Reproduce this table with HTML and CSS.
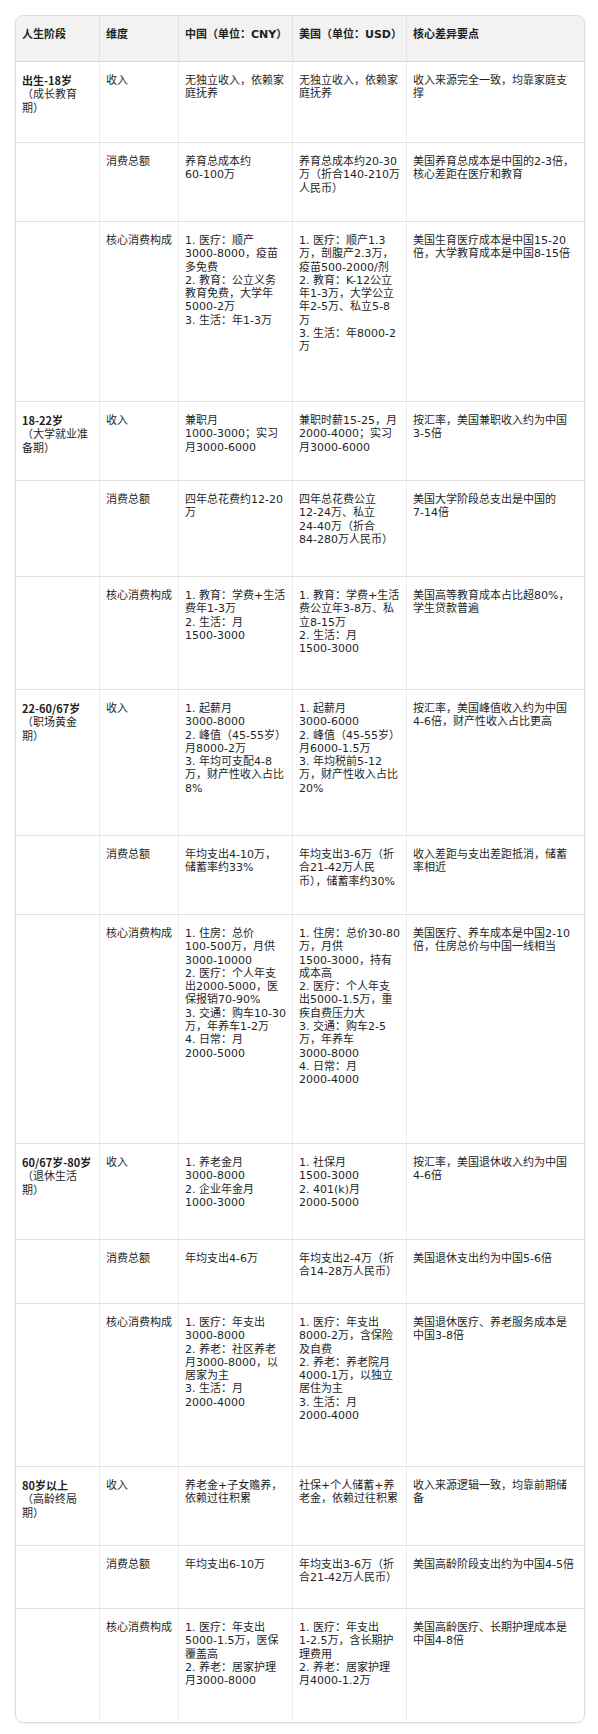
FILE: index.html
```html
<!DOCTYPE html>
<html lang="zh">
<head>
<meta charset="utf-8">
<link rel="stylesheet" href="styles.css">
</head>
<body>
<div class="wrap">
<table class="cmp">
<thead>
<tr class="rh"><th class="k1">人生阶段</th><th class="k2">维度</th><th class="k3">中国（单位：CNY）</th><th class="k4">美国（单位：USD）</th><th class="k5">核心差异要点</th></tr>
</thead>
<tbody>
<tr class="r81"><td><b>出生-18岁</b><br>（成长教育期）</td><td>收入</td><td>无独立收入，依赖家庭抚养</td><td>无独立收入，依赖家庭抚养</td><td>收入来源完全一致，均靠家庭支撑</td></tr>
<tr class="r79"><td></td><td>消费总额</td><td>养育总成本约<span class="n">60-100</span>万</td><td>养育总成本约<span class="n">20-30</span>万（折合<span class="n">140-210</span>万人民币）</td><td>美国养育总成本是中国的<span class="n">2-3</span>倍，核心差距在医疗和教育</td></tr>
<tr class="r180"><td></td><td>核心消费构成</td><td>1. 医疗：顺产<span class="n">3000-8000</span>，疫苗多免费<br>2. 教育：公立义务教育免费，大学年<span class="n">5000-2</span>万<br>3. 生活：年<span class="n">1-3</span>万</td><td>1. 医疗：顺产1.3万，剖腹产2.3万，疫苗<span class="n">500-2000/</span>剂<br>2. 教育：<span class="n">K-12</span>公立年<span class="n">1-3</span>万，大学公立年<span class="n">2-5</span>万、私立<span class="n">5-8</span>万<br>3. 生活：年<span class="n">8000-2</span>万</td><td>美国生育医疗成本是中国<span class="n">15-20</span>倍，大学教育成本是中国<span class="n">8-15</span>倍</td></tr>

<tr class="r79"><td><b>18-22岁</b><br>（大学就业准备期）</td><td>收入</td><td>兼职月<span class="n">1000-3000</span>；实习月<span class="n">3000-6000</span></td><td>兼职时薪<span class="n">15-25</span>，月<span class="n">2000-4000</span>；实习月<span class="n">3000-6000</span></td><td>按汇率，美国兼职收入约为中国<span class="n">3-5</span>倍</td></tr>
<tr class="r96"><td></td><td>消费总额</td><td>四年总花费约<span class="n">12-20</span>万</td><td>四年总花费公立<span class="n">12-24</span>万、私立<span class="n">24-40</span>万（折合<span class="n">84-280</span>万人民币）</td><td>美国大学阶段总支出是中国的<span class="n">7-14</span>倍</td></tr>
<tr class="r113"><td></td><td>核心消费构成</td><td>1. 教育：学费+生活费年<span class="n">1-3</span>万<br>2. 生活：月<span class="n">1500-3000</span></td><td>1. 教育：学费+生活费公立年<span class="n">3-8</span>万、私立<span class="n">8-15</span>万<br>2. 生活：月<span class="n">1500-3000</span></td><td>美国高等教育成本占比超80%，学生贷款普遍</td></tr>

<tr class="r146"><td><b>22-60/67岁</b><br>（职场黄金期）</td><td>收入</td><td>1. 起薪月<span class="n">3000-8000</span><br>2. 峰值（<span class="n">45-55</span>岁）月<span class="n">8000-2</span>万<br>3. 年均可支配<span class="n">4-8</span>万，财产性收入占比8%</td><td>1. 起薪月<span class="n">3000-6000</span><br>2. 峰值（<span class="n">45-55</span>岁）月<span class="n">6000-1.5</span>万<br>3. 年均税前<span class="n">5-12</span>万，财产性收入占比20%</td><td>按汇率，美国峰值收入约为中国<span class="n">4-6</span>倍，财产性收入占比更高</td></tr>
<tr class="r79"><td></td><td>消费总额</td><td>年均支出<span class="n">4-10</span>万，储蓄率约33%</td><td>年均支出<span class="n">3-6</span>万（折合<span class="n">21-42</span>万人民币），储蓄率约30%</td><td>收入差距与支出差距抵消，储蓄率相近</td></tr>
<tr class="r229"><td></td><td>核心消费构成</td><td>1. 住房：总价<span class="n">100-500</span>万，月供<span class="n">3000-10000</span><br>2. 医疗：个人年支出<span class="n">2000-5000</span>，医保报销<span class="n">70-90%</span><br>3. 交通：购车<span class="n">10-30</span>万，年养车<span class="n">1-2</span>万<br>4. 日常：月<span class="n">2000-5000</span></td><td>1. 住房：总价<span class="n">30-80</span>万，月供<span class="n">1500-3000</span>，持有成本高<br>2. 医疗：个人年支出<span class="n">5000-1.5</span>万，重疾自费压力大<br>3. 交通：购车<span class="n">2-5</span>万，年养车<span class="n">3000-8000</span><br>4. 日常：月<span class="n">2000-4000</span></td><td>美国医疗、养车成本是中国<span class="n">2-10</span>倍，住房总价与中国一线相当</td></tr>

<tr class="r96"><td><b>60/67岁-80岁</b><br>（退休生活期）</td><td>收入</td><td>1. 养老金月<span class="n">3000-8000</span><br>2. 企业年金月<span class="n">1000-3000</span></td><td>1. 社保月<span class="n">1500-3000</span><br>2. 401(k)月<span class="n">2000-5000</span></td><td>按汇率，美国退休收入约为中国<span class="n">4-6</span>倍</td></tr>
<tr class="r64"><td></td><td>消费总额</td><td>年均支出<span class="n">4-6</span>万</td><td>年均支出<span class="n">2-4</span>万（折合<span class="n">14-28</span>万人民币）</td><td>美国退休支出约为中国<span class="n">5-6</span>倍</td></tr>
<tr class="r163"><td></td><td>核心消费构成</td><td>1. 医疗：年支出<span class="n">3000-8000</span><br>2. 养老：社区养老月<span class="n">3000-8000</span>，以居家为主<br>3. 生活：月<span class="n">2000-4000</span></td><td>1. 医疗：年支出<span class="n">8000-2</span>万，含保险及自费<br>2. 养老：养老院月<span class="n">4000-1</span>万，以独立居住为主<br>3. 生活：月<span class="n">2000-4000</span></td><td>美国退休医疗、养老服务成本是中国<span class="n">3-8</span>倍</td></tr>

<tr class="r79"><td><b>80岁以上</b><br>（高龄终局期）</td><td>收入</td><td>养老金+子女赡养，依赖过往积累</td><td>社保+个人储蓄+养老金，依赖过往积累</td><td>收入来源逻辑一致，均靠前期储备</td></tr>
<tr class="r63"><td></td><td>消费总额</td><td>年均支出<span class="n">6-10</span>万</td><td>年均支出<span class="n">3-6</span>万（折合<span class="n">21-42</span>万人民币）</td><td>美国高龄阶段支出约为中国<span class="n">4-5</span>倍</td></tr>
<tr class="r113 last"><td></td><td>核心消费构成</td><td>1. 医疗：年支出<span class="n">5000-1.5</span>万，医保覆盖高<br>2. 养老：居家护理月<span class="n">3000-8000</span></td><td>1. 医疗：年支出<span class="n">1-2.5</span>万，含长期护理费用<br>2. 养老：居家护理月<span class="n">4000-1.2</span>万</td><td>美国高龄医疗、长期护理成本是中国<span class="n">4-8</span>倍</td></tr>
</tbody>
</table>
</div>
</body>
</html>
```

FILE: styles.css
```css
html, body {
  margin: 0;
  padding: 0;
  background: #ffffff;
}
body {
  padding: 15px 13px 13px 15px;
  font-family: "DejaVu Sans", "Noto Sans CJK SC", sans-serif;
  font-size: 11px;
  line-height: 13.3px;
  color: #1f1f1f;
}
.wrap {
  width: 568px;
  border: 1px solid #dcdcdc;
  border-radius: 8px;
  overflow: hidden;
  box-shadow: 0 1px 2px rgba(0, 0, 0, 0.06);
}
.cmp {
  width: 568px;
  border-collapse: separate;
  border-spacing: 0;
  table-layout: fixed;
}
th, td {
  box-sizing: border-box;
  text-align: left;
  vertical-align: top;
  padding: 12px 5.5px 0 6px;
  border-right: 1px solid #ececec;
  border-bottom: 1px solid #e0e0e0;
}
th:first-child, td:first-child {
  padding-right: 2px;
  text-spacing-trim: space-all;
}
th:nth-child(2), td:nth-child(2) { padding-right: 5px; }
th:last-child, td:last-child {
  border-right: none;
  padding-right: 8.5px;
}
.k1 { width: 84px; }
.k2 { width: 79px; }
.k3 { width: 114px; }
.k4 { width: 114px; }
.k5 { width: 177px; }
.last td { border-bottom: none; }
th {
  background: #f2f2f2;
  font-weight: 700;
  border-bottom: 1px solid #d6d6d6;
  border-right-color: #e2e2e2;
}
td b {
  font-weight: 700;
  font-family: "Noto Sans CJK SC", sans-serif;
}
.n { white-space: nowrap; }
.rh { height: 46px; }
.r63 { height: 63px; }
.r64 { height: 64px; }
.r79 { height: 79px; }
.r81 { height: 81px; }
.r96 { height: 96px; }
.r113 { height: 113px; }
.r146 { height: 146px; }
.r163 { height: 163px; }
.r180 { height: 180px; }
.r229 { height: 229px; }
```
